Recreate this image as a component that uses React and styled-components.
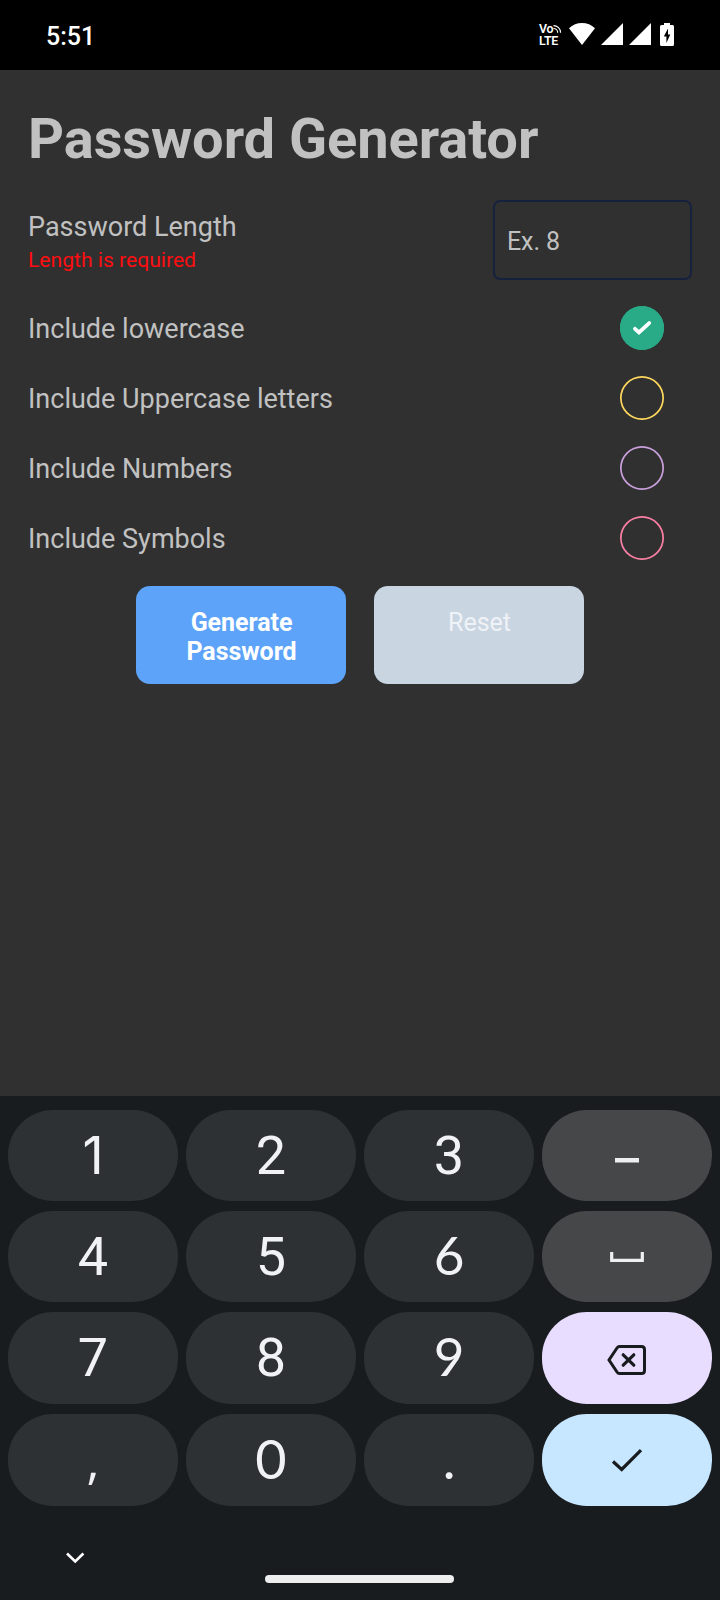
import React from "react";
import styled, { createGlobalStyle } from "styled-components";

const GlobalStyle = createGlobalStyle`
  * { box-sizing: border-box; }
  body {
    margin: 0;
    background: #303030;
    font-family: Roboto, "Liberation Sans", sans-serif;
  }
`;

const Screen = styled.div`
  width: 720px;
  height: 1600px;
  display: flex;
  flex-direction: column;
  background: #303030;
  overflow: hidden;
`;

const StatusBar = styled.header`
  height: 70px;
  flex: none;
  display: flex;
  justify-content: space-between;
  align-items: flex-start;
  padding: 23px 46px 0 46px;
  background: #000;
  color: #fff;
`;

const Clock = styled.time`
  font-size: 25px;
  line-height: 28px;
  font-weight: 500;
`;

const StatusIcons = styled.div`
  display: flex;
  align-items: flex-start;
`;

const VolteBadge = styled.div`
  width: 23px;
  margin-right: 7px;
  font-size: 12.4px;
  line-height: 12px;
  font-weight: 600;
  letter-spacing: -0.3px;
`;

const VolteTop = styled.div`
  display: flex;
  align-items: center;
  height: 12px;
`;

const StatusGlyph = styled.svg`
  display: block;
  margin-right: ${(p) => p.$gap || 0}px;
`;

const Form = styled.main`
  flex: none;
  height: 1026px;
  padding: 36px 28px 0;
  color: #c1c1c1;
`;

const Title = styled.h1`
  margin: 0;
  font-size: 56px;
  line-height: 66px;
  font-weight: 700;
  letter-spacing: -0.06px;
`;

const LengthRow = styled.div`
  display: flex;
  justify-content: space-between;
  margin-top: 28px;
`;

const LengthText = styled.div`
  padding-top: 11px;
`;

const Label = styled.div`
  padding-top: ${(p) => p.$drop || 0}px;
  font-size: 27px;
  line-height: 32px;
`;

const ErrorText = styled.div`
  margin-top: 4px;
  font-size: 21.1px;
  line-height: 25px;
  color: #ff0d10;
`;

const LengthInput = styled.input`
  width: 199px;
  height: 80px;
  padding: 3px 12px 0;
  border: 2px solid #16213e;
  border-radius: 7px;
  background: transparent;
  color: #c1c1c1;
  font: 25px Roboto, sans-serif;
  letter-spacing: -0.1px;
  outline: none;
  &::placeholder { color: #c1c1c1; opacity: 1; }
`;

const Options = styled.div`
  margin-top: 13px;
`;

const OptionRow = styled.div`
  height: 70px;
  display: flex;
  align-items: center;
  justify-content: space-between;
  padding-right: 28px;
`;

const RoundCheck = styled.span`
  width: 44px;
  height: 44px;
  display: flex;
  align-items: center;
  justify-content: center;
  border-radius: 50%;
  box-shadow: inset 0 0 0 1.7px ${(p) => p.$color};
  background: ${(p) => (p.$checked ? p.$color : "transparent")};
`;

const Actions = styled.div`
  display: flex;
  justify-content: center;
  gap: 28px;
  margin-top: 13px;
`;

const ActionButton = styled.button`
  width: 210px;
  height: 98px;
  display: flex;
  justify-content: center;
  align-items: flex-start;
  padding: 22px 40px 0 41px;
  border: 0;
  border-radius: 14px;
  background: ${(p) => (p.$primary ? "#5da3fa" : "#cad5e2")};
  color: ${(p) => (p.$primary ? "#fff" : "#eff2f6")};
  font: ${(p) => (p.$primary ? 700 : 400)} 25px/29px Roboto, sans-serif;
  letter-spacing: -0.05px;
  text-align: center;
`;

const Keyboard = styled.section`
  flex: 1;
  display: flex;
  flex-direction: column;
  padding: 14px 8px 0;
  background: #191c1f;
`;

const KeyGrid = styled.div`
  display: grid;
  grid-template-columns: repeat(4, 170px);
  grid-template-rows: 91px 91px 92px 92px;
  gap: 10px 8px;
`;

const keyTones = {
  digit: "#2d3134",
  side: "#464749",
  erase: "#e8dcff",
  enter: "#c6e7ff",
};

const Key = styled.button`
  display: flex;
  align-items: center;
  justify-content: center;
  padding: ${(p) => p.$drop || 0}px 0 ${(p) => p.$lift || 0}px;
  border: 0;
  border-radius: 45px;
  background: ${(p) => keyTones[p.$tone]};
  color: #f1f2f4;
  font-family: ${(p) => (p.$face ? `"${p.$face}", ` : "")}Roboto, sans-serif;
  font-size: ${(p) => p.$size || 54}px;
  line-height: 60px;
`;

const NavBar = styled.footer`
  height: 94px;
  display: grid;
  grid-template-columns: 257px 189px;
  align-items: start;
`;

const HideButton = styled.svg`
  display: block;
  margin: 45px 0 0 57px;
`;

const HomePill = styled.div`
  height: 8px;
  margin-top: 69px;
  border-radius: 4px;
  background: #eeeeee;
`;

const options = [
  { label: "Include lowercase", color: "#29ab87", checked: true },
  { label: "Include Uppercase letters", color: "#fed85d" },
  { label: "Include Numbers", color: "#c9a0dc" },
  { label: "Include Symbols", color: "#fc80a5" },
];

const CheckGlyph = () => (
  <svg width="20" height="16" viewBox="0 0 20 16" fill="none">
    <path d="M3 8.8 7 12.5 17.2 3.1" stroke="#fff" strokeWidth="3.8" strokeLinecap="round" strokeLinejoin="miter" />
  </svg>
);

const DashGlyph = () => (
  <svg width="24" height="5" viewBox="0 0 24 5">
    <rect width="24" height="4.5" fill="#eeeff0" />
  </svg>
);

const SpaceGlyph = () => (
  <svg width="34" height="10" viewBox="0 0 34 10" fill="none">
    <path d="M1.7 0V8.3H32.3V0" stroke="#eeeff0" strokeWidth="3.2" />
  </svg>
);

const EraseGlyph = () => (
  <svg width="40" height="32" viewBox="0 0 40 32" fill="none" stroke="#191c1f" strokeWidth="3">
    <path d="M12.5 2.5H34.5Q37.5 2.5 37.5 5.5V26.5Q37.5 29.5 34.5 29.5H12.5Q11 29.5 10 28L2 16 10 4Q11 2.5 12.5 2.5Z" />
    <path d="M16.2 10.8 26.8 21.2M26.8 10.8 16.2 21.2" strokeWidth="3.2" strokeLinecap="round" />
  </svg>
);

const EnterGlyph = () => (
  <svg width="32" height="24" viewBox="0 0 32 24" fill="none">
    <path d="M2 13.5 10.7 21.5 30 2.2" stroke="#191c1f" strokeWidth="3.2" />
  </svg>
);

const keys = [
  { text: "1", face: "Inter", size: 52, drop: 1 },
  { text: "2" },
  { text: "3" },
  { glyph: <DashGlyph />, tone: "side", drop: 9 },
  { text: "4" },
  { text: "5" },
  { text: "6", face: "Lato", size: 53, lift: 3 },
  { glyph: <SpaceGlyph />, tone: "side" },
  { text: "7" },
  { text: "8" },
  { text: "9", face: "Lato", size: 53, lift: 4 },
  { glyph: <EraseGlyph />, tone: "erase", drop: 3 },
  { text: ",", face: "Open Sans", size: 50 },
  { text: "0", face: "Lato", lift: 3 },
  { text: ".", face: "Lato", lift: 2 },
  { glyph: <EnterGlyph />, tone: "enter" },
];

export default function App() {
  return (
    <Screen>
      <GlobalStyle />
      <StatusBar>
        <Clock>5:51</Clock>
        <StatusIcons>
          <VolteBadge>
            <VolteTop>
              Vo
              <svg width="10" height="10" viewBox="0 0 10 10" fill="none" stroke="#fff" strokeWidth="1.3">
                <path d="M0.5 1.2A8 8 0 0 1 8.6 9.3M0.5 4.4A4.8 4.8 0 0 1 5.3 9.2" />
              </svg>
            </VolteTop>
            LTE
          </VolteBadge>
          <StatusGlyph width="26" height="22" viewBox="0 0 26 22" $gap={6}>
            <path d="M0 5.2Q5.5 0 13 0T26 5.2L13 22Z" fill="#fff" />
          </StatusGlyph>
          <StatusGlyph width="22" height="22" viewBox="0 0 22 22" $gap={6}>
            <path d="M22 0V22H0Z" fill="#fff" />
          </StatusGlyph>
          <StatusGlyph width="22" height="22" viewBox="0 0 22 22" $gap={9}>
            <path d="M22 0V22H0Z" fill="#fff" />
          </StatusGlyph>
          <StatusGlyph width="14" height="23" viewBox="0 0 14 23">
            <path d="M4 0H10V2H12.5Q14 2 14 3.5V21.5Q14 23 12.5 23H1.5Q0 23 0 21.5V3.5Q0 2 1.5 2H4Z" fill="#fff" />
            <path d="M8 5.5 3.8 13.5H6.4V20L10.3 11.5H8Z" fill="#000" />
          </StatusGlyph>
        </StatusIcons>
      </StatusBar>

      <Form>
        <Title>Password Generator</Title>
        <LengthRow>
          <LengthText>
            <Label>Password Length</Label>
            <ErrorText>Length is required</ErrorText>
          </LengthText>
          <LengthInput placeholder="Ex. 8" />
        </LengthRow>
        <Options>
          {options.map((o) => (
            <OptionRow key={o.label}>
              <Label $drop={1}>{o.label}</Label>
              <RoundCheck $color={o.color} $checked={o.checked}>
                {o.checked && <CheckGlyph />}
              </RoundCheck>
            </OptionRow>
          ))}
        </Options>
        <Actions>
          <ActionButton $primary>Generate Password</ActionButton>
          <ActionButton>Reset</ActionButton>
        </Actions>
      </Form>

      <Keyboard>
        <KeyGrid>
          {keys.map((k, i) => (
            <Key
              key={i}
              $tone={k.tone || "digit"}
              $face={k.face}
              $size={k.size}
              $lift={k.lift}
              $drop={k.drop}
            >
              {k.text || k.glyph}
            </Key>
          ))}
        </KeyGrid>
        <NavBar>
          <HideButton width="20" height="14" viewBox="0 0 20 14" fill="none">
            <path d="M2 2.5 10.2 10.5 18.4 2.5" stroke="#fff" strokeWidth="2.6" />
          </HideButton>
          <HomePill />
        </NavBar>
      </Keyboard>
    </Screen>
  );
}
